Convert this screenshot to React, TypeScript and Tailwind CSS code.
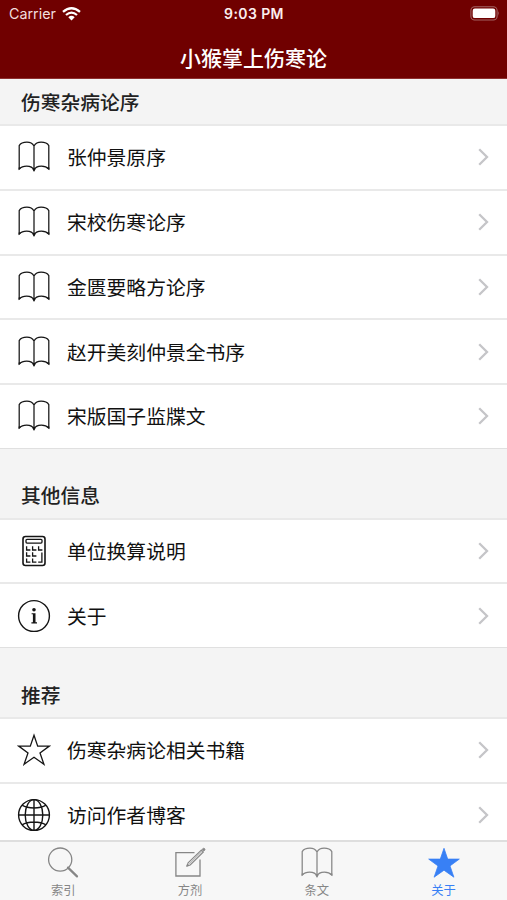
import type { ReactNode } from "react";

type IconProps = { className?: string };

function Book({ className = "" }: IconProps) {
  return (
    <svg width="32" height="32" viewBox="0 0 32 32" fill="none" stroke="currentColor" strokeWidth="1.25" strokeLinejoin="round" className={className}>
      <path d="M16 5C14.5 2.4 12 1.2 8.9 1.2C5.5 1.2 2.6 2.2 1.2 4.6V28C3 26 5.6 25.1 8.6 25.1C12 25.1 14.8 26.2 16 29.2C17.2 26.2 20 25.1 23.4 25.1C26.4 25.1 29 26 30.8 28V4.6C29.4 2.2 26.5 1.2 23.1 1.2C20 1.2 17.5 2.4 16 5ZM16 5V29" />
      <path d="M14.2 27.6H17.8L16 31ZM0.6 26.5L3 26.9L0.6 29.3ZM31.4 26.5L29 26.9L31.4 29.3Z" fill="currentColor" stroke="none" />
    </svg>
  );
}

function Calculator() {
  return (
    <svg width="32" height="32" viewBox="0 0 32 32" fill="none" stroke="currentColor" strokeWidth="1.3">
      <rect x="5" y="1.5" width="22" height="29" rx="2.5" strokeWidth="1.6" />
      <rect x="8" y="4.3" width="16" height="3.8" rx="1" />
      <path d="M8.6 11.2V15H12.4M14.6 11.2V15H18.4M20.6 11.2V15H24.4M8.6 17.2V21H12.4M14.6 17.2V21H18.4M8.6 23.4V27.2H12.4M14.6 23.4V27.2H18.4M20.2 27.2H23.9V17.5" />
    </svg>
  );
}

function Info() {
  return (
    <svg width="34" height="34" viewBox="0 0 34 34" fill="none" stroke="currentColor">
      <circle cx="17" cy="17" r="15.4" strokeWidth="1.4" />
      <circle cx="17" cy="10.7" r="1.8" fill="currentColor" stroke="none" />
      <path d="M14.6 14.2H18.5V23.2H20V24.4H14.4V23.2H15.9V15.2H14.6Z" fill="currentColor" stroke="none" />
    </svg>
  );
}

function Star({ filled = false }: { filled?: boolean }) {
  return (
    <svg width="34" height="34" viewBox="0 0 34 34" fill={filled ? "currentColor" : "none"} stroke="currentColor" strokeWidth={filled ? 0.8 : 1.3}>
      <path d="M17 2.3L20.7 13.1H32.3L23 19.9L26.9 31.2L17 24.2L7.1 31.2L11 19.9L1.7 13.1H13.3Z" />
    </svg>
  );
}

function Globe() {
  return (
    <svg width="34" height="34" viewBox="0 0 34 34" fill="none" stroke="currentColor" strokeWidth="1.4">
      <circle cx="17" cy="17" r="15.4" />
      <ellipse cx="17" cy="17" rx="8.8" ry="15.4" />
      <path d="M17 1.6V32.4M1.6 17H32.4M5 7.2C8 9 12 10 17 10C22 10 26 9 29 7.2M5 26.8C8 25 12 24 17 24C22 24 26 25 29 26.8" />
    </svg>
  );
}

function Search() {
  return (
    <svg width="32" height="32" viewBox="0 0 32 32" fill="none" stroke="currentColor">
      <circle cx="13.2" cy="12.6" r="11.6" strokeWidth="1.3" />
      <path d="M21 20.6L30 29.4" strokeWidth="2.2" strokeLinecap="round" />
    </svg>
  );
}

function Compose() {
  return (
    <svg width="32" height="32" viewBox="0 0 32 32" fill="none" stroke="currentColor" strokeWidth="1.3">
      <path d="M20.5 5.6H1.9V29H26V12.5" />
      <path d="M13 19L14.1 15.9L27.4 3L29.4 5L16.2 18Z" strokeWidth="1.1" />
      <path d="M15.2 17L28.4 4" strokeWidth="0.7" />
      <path d="M28.2 2.2L29.2 1.4Q30 1 30.6 1.6Q31.3 2.3 30.8 3.1L30 4Z" fill="currentColor" strokeWidth="0.8" />
      <path d="M12.8 19.2L13.5 17L15 18.5Z" fill="currentColor" strokeWidth="0.8" />
    </svg>
  );
}

function Row({ icon, label }: { icon: ReactNode; label: string }) {
  return (
    <div className="flex h-[64.75px] shrink-0 items-center border-t-2 border-[#e9e9e9] bg-white pr-[17px]">
      <span className="ml-[17px] flex w-[34px] justify-center text-[#151515]">{icon}</span>
      <span className="ml-4 flex-1 text-[19.8px] leading-none text-[#111]">{label}</span>
      <svg width="13" height="20" viewBox="0 0 13 20" fill="none" stroke="#c5c5c8" strokeWidth="2.3">
        <path d="M2.2 2.2L10 10L2.2 17.8" />
      </svg>
    </div>
  );
}

function Heading({ label, first = false }: { label: string; first?: boolean }) {
  return (
    <h2 className={`flex shrink-0 items-end bg-[#f4f4f4] pl-[21px] text-[19.75px] leading-none font-medium text-[#222] ${first ? "h-[45px] pb-[12px]" : "h-[69.75px] border-t border-[#e0e0e0] pb-[12.5px]"}`}>
      {label}
    </h2>
  );
}

function Tab({ icon, label, active = false }: { icon: ReactNode; label: string; active?: boolean }) {
  return (
    <div className={`flex flex-1 flex-col items-center pt-1 ${active ? "text-[#3880f5]" : "text-[#868686]"}`}>
      <span className="flex h-[34px] items-center">{icon}</span>
      <span className="mt-[3.5px] text-[12.3px] leading-none">{label}</span>
    </div>
  );
}

export default function App() {
  return (
    <div className="flex h-[900px] w-[507px] flex-col overflow-hidden bg-[#f4f4f4] font-['Noto_Sans_CJK_SC',sans-serif]">
      <header className="h-[79px] shrink-0 border-b border-[#8e3030] bg-[#700000] text-white">
        <div className="grid h-[27px] grid-cols-3 items-center pr-[7px] pl-[9px] font-[Inter,sans-serif]">
          <div className="flex items-center gap-[6px] text-[#f2dede]">
            <span className="text-[14.3px]">Carrier</span>
            <svg width="19" height="14" viewBox="0 0 19 14" fill="none" stroke="white" strokeWidth="2.3">
              <path d="M1 4.9Q9.5 -2.4 18 4.9M4 8Q9.5 3.2 15 8" />
              <path d="M6.3 10.2Q9.5 7.4 12.7 10.2L9.5 13.5Z" fill="white" stroke="none" />
            </svg>
          </div>
          <span className="-ml-[1px] text-center text-[14px] font-semibold tracking-[0.4px] text-[#fbeeee]">9:03 PM</span>
          <svg className="justify-self-end" width="30" height="15" viewBox="0 0 30 15" fill="none">
            <rect x="0.9" y="0.7" width="26.2" height="13.3" rx="3.8" stroke="#a26363" strokeWidth="1.1" />
            <rect x="2.7" y="2.6" width="22.6" height="9.5" rx="2.2" fill="white" />
            <path d="M28.2 5Q30 7.3 28.2 9.7Z" fill="#a26363" />
          </svg>
        </div>
        <h1 className="pt-[20px] text-center text-[21px] leading-none font-medium">小猴掌上伤寒论</h1>
      </header>
      <main className="flex min-h-0 flex-1 flex-col overflow-hidden">
        <Heading label="伤寒杂病论序" first />
        <Row icon={<Book />} label="张仲景原序" />
        <Row icon={<Book />} label="宋校伤寒论序" />
        <Row icon={<Book />} label="金匮要略方论序" />
        <Row icon={<Book />} label="赵开美刻仲景全书序" />
        <Row icon={<Book />} label="宋版国子监牒文" />
        <Heading label="其他信息" />
        <Row icon={<Calculator />} label="单位换算说明" />
        <Row icon={<Info />} label="关于" />
        <Heading label="推荐" />
        <Row icon={<Star />} label="伤寒杂病论相关书籍" />
        <Row icon={<Globe />} label="访问作者博客" />
      </main>
      <nav className="flex h-[60px] shrink-0 border-t-2 border-[#dedede] bg-[#f7f7f7]">
        <Tab icon={<Search />} label="索引" />
        <Tab icon={<Compose />} label="方剂" />
        <Tab icon={<Book />} label="条文" />
        <Tab icon={<Star filled />} label="关于" active />
      </nav>
    </div>
  );
}
